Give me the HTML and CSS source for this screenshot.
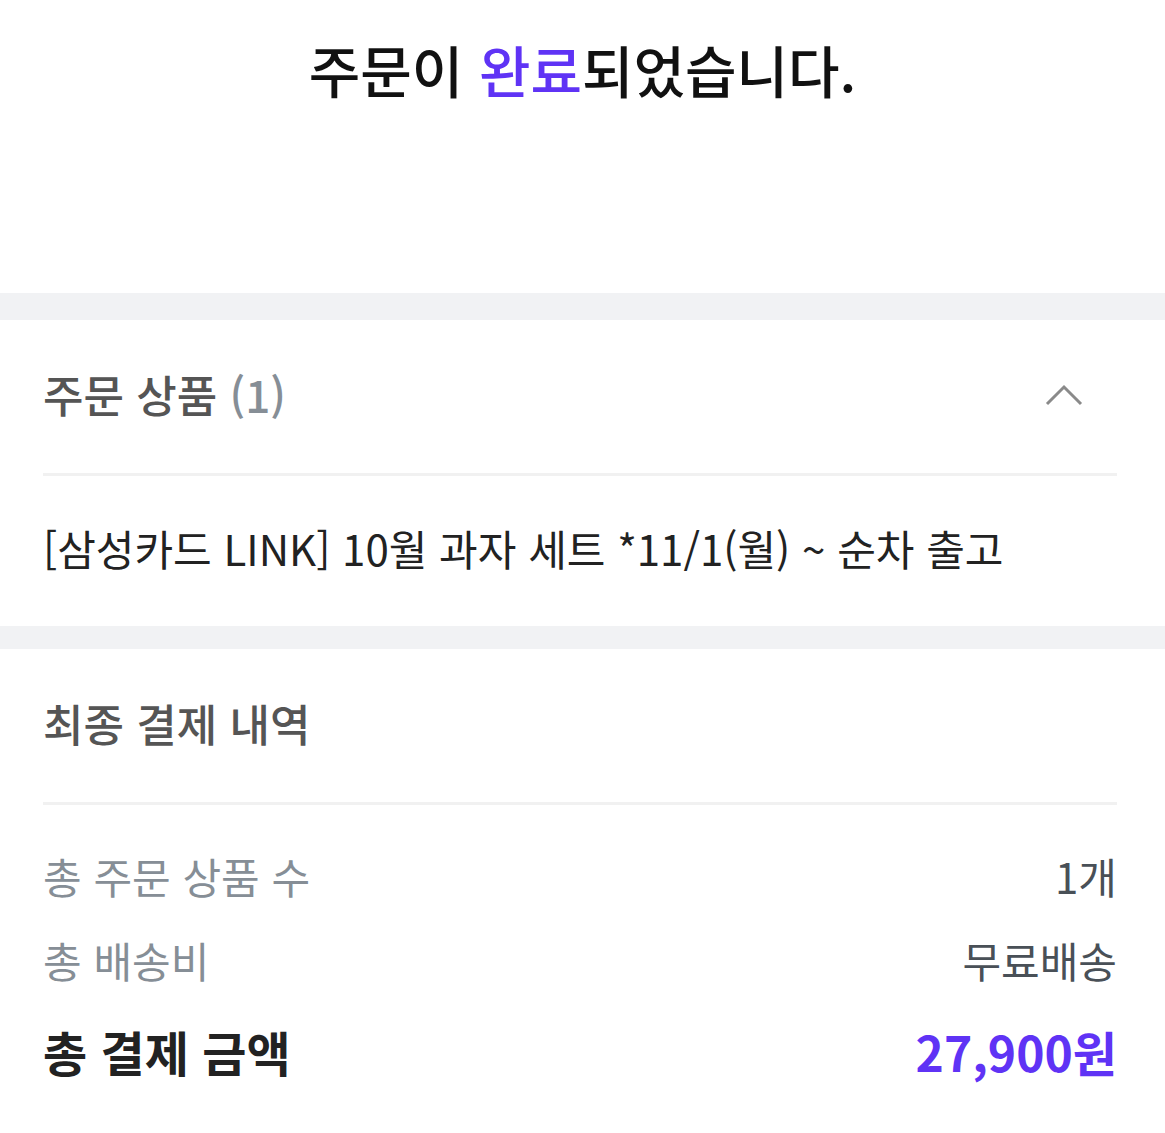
FILE: index.html
```html
<!DOCTYPE html>
<html lang="ko">
<head>
    <meta charset="UTF-8">
    <meta name="viewport" content="width=device-width, initial-scale=1.0">
    <title>주문 완료</title>
    <link rel="stylesheet" href="styles.css">
</head>
<body>
    <div class="complete-header">
        <h1>주문이 <span class="point">완료</span>되었습니다.</h1>
    </div>

    <div class="gap"></div>

    <!-- 주문 상품 -->
    <section class="section">
        <div class="section-title">
            <h2>주문 상품 <span class="count">(1)</span></h2>
            <svg class="toggle" width="38" height="23" viewBox="0 0 38 23">
                <polyline points="2,20 19,3 36,20" fill="none" stroke="#8a8a8a" stroke-width="3"/>
            </svg>
        </div>
        <div class="product-name">[삼성카드 LINK] 10월 과자 세트 *11/1(월) ~ 순차 출고</div>
    </section>

    <div class="gap small"></div>

    <!-- 최종 결제 내역 -->
    <section class="section">
        <div class="section-title">
            <h2>최종 결제 내역</h2>
        </div>
        <div class="pay-list">
            <div class="pay-row">
                <span class="label">총 주문 상품 수</span>
                <span class="value">1개</span>
            </div>
            <div class="pay-row">
                <span class="label">총 배송비</span>
                <span class="value">무료배송</span>
            </div>
            <div class="pay-row total">
                <span class="label">총 결제 금액</span>
                <span class="value">27,900원</span>
            </div>
        </div>
    </section>
</body>
</html>
```

FILE: styles.css
```css
body {
    margin: 0;
    font-family: "Noto Sans CJK KR", "Noto Sans", sans-serif;
    background-color: #fff;
    color: #222;
}

.complete-header {
    height: 293px;
    text-align: center;
}

.complete-header h1 {
    margin: 0;
    padding-top: 33px;
    font-size: 56px;
    font-weight: 500;
    line-height: 72px;
    color: #111;
}

.point {
    color: #5f33f5;
}

.gap {
    height: 27px;
    background-color: #f1f2f4;
}

.gap.small {
    height: 23px;
}

.section {
    padding: 0 48px 0 43px;
}

.section-title {
    display: flex;
    justify-content: space-between;
    align-items: center;
    height: 156px;
    padding-bottom: 6px;
    border-bottom: 3px solid #f1f1f1;
    box-sizing: border-box;
}

.section-title h2 {
    margin: 0;
    font-size: 44px;
    font-weight: 500;
    color: #555;
}

.count {
    color: #868e96;
}

.toggle {
    margin-right: 34px;
    margin-top: 4px;
}

.product-name {
    height: 150px;
    padding-bottom: 8px;
    box-sizing: border-box;
    display: flex;
    align-items: center;
    font-size: 42px;
    color: #222;
}

.pay-list {
    padding: 28px 0 30px;
}

.pay-row {
    display: flex;
    justify-content: space-between;
    align-items: center;
    height: 84px;
    font-size: 42px;
}

.pay-row .label {
    color: #868e96;
}

.pay-row .value {
    color: #495057;
}

.pay-row.total {
    height: 100px;
    font-size: 48px;
    font-weight: 700;
}

.pay-row.total .label {
    color: #222;
}

.pay-row.total .value {
    color: #5f33f5;
}
```
